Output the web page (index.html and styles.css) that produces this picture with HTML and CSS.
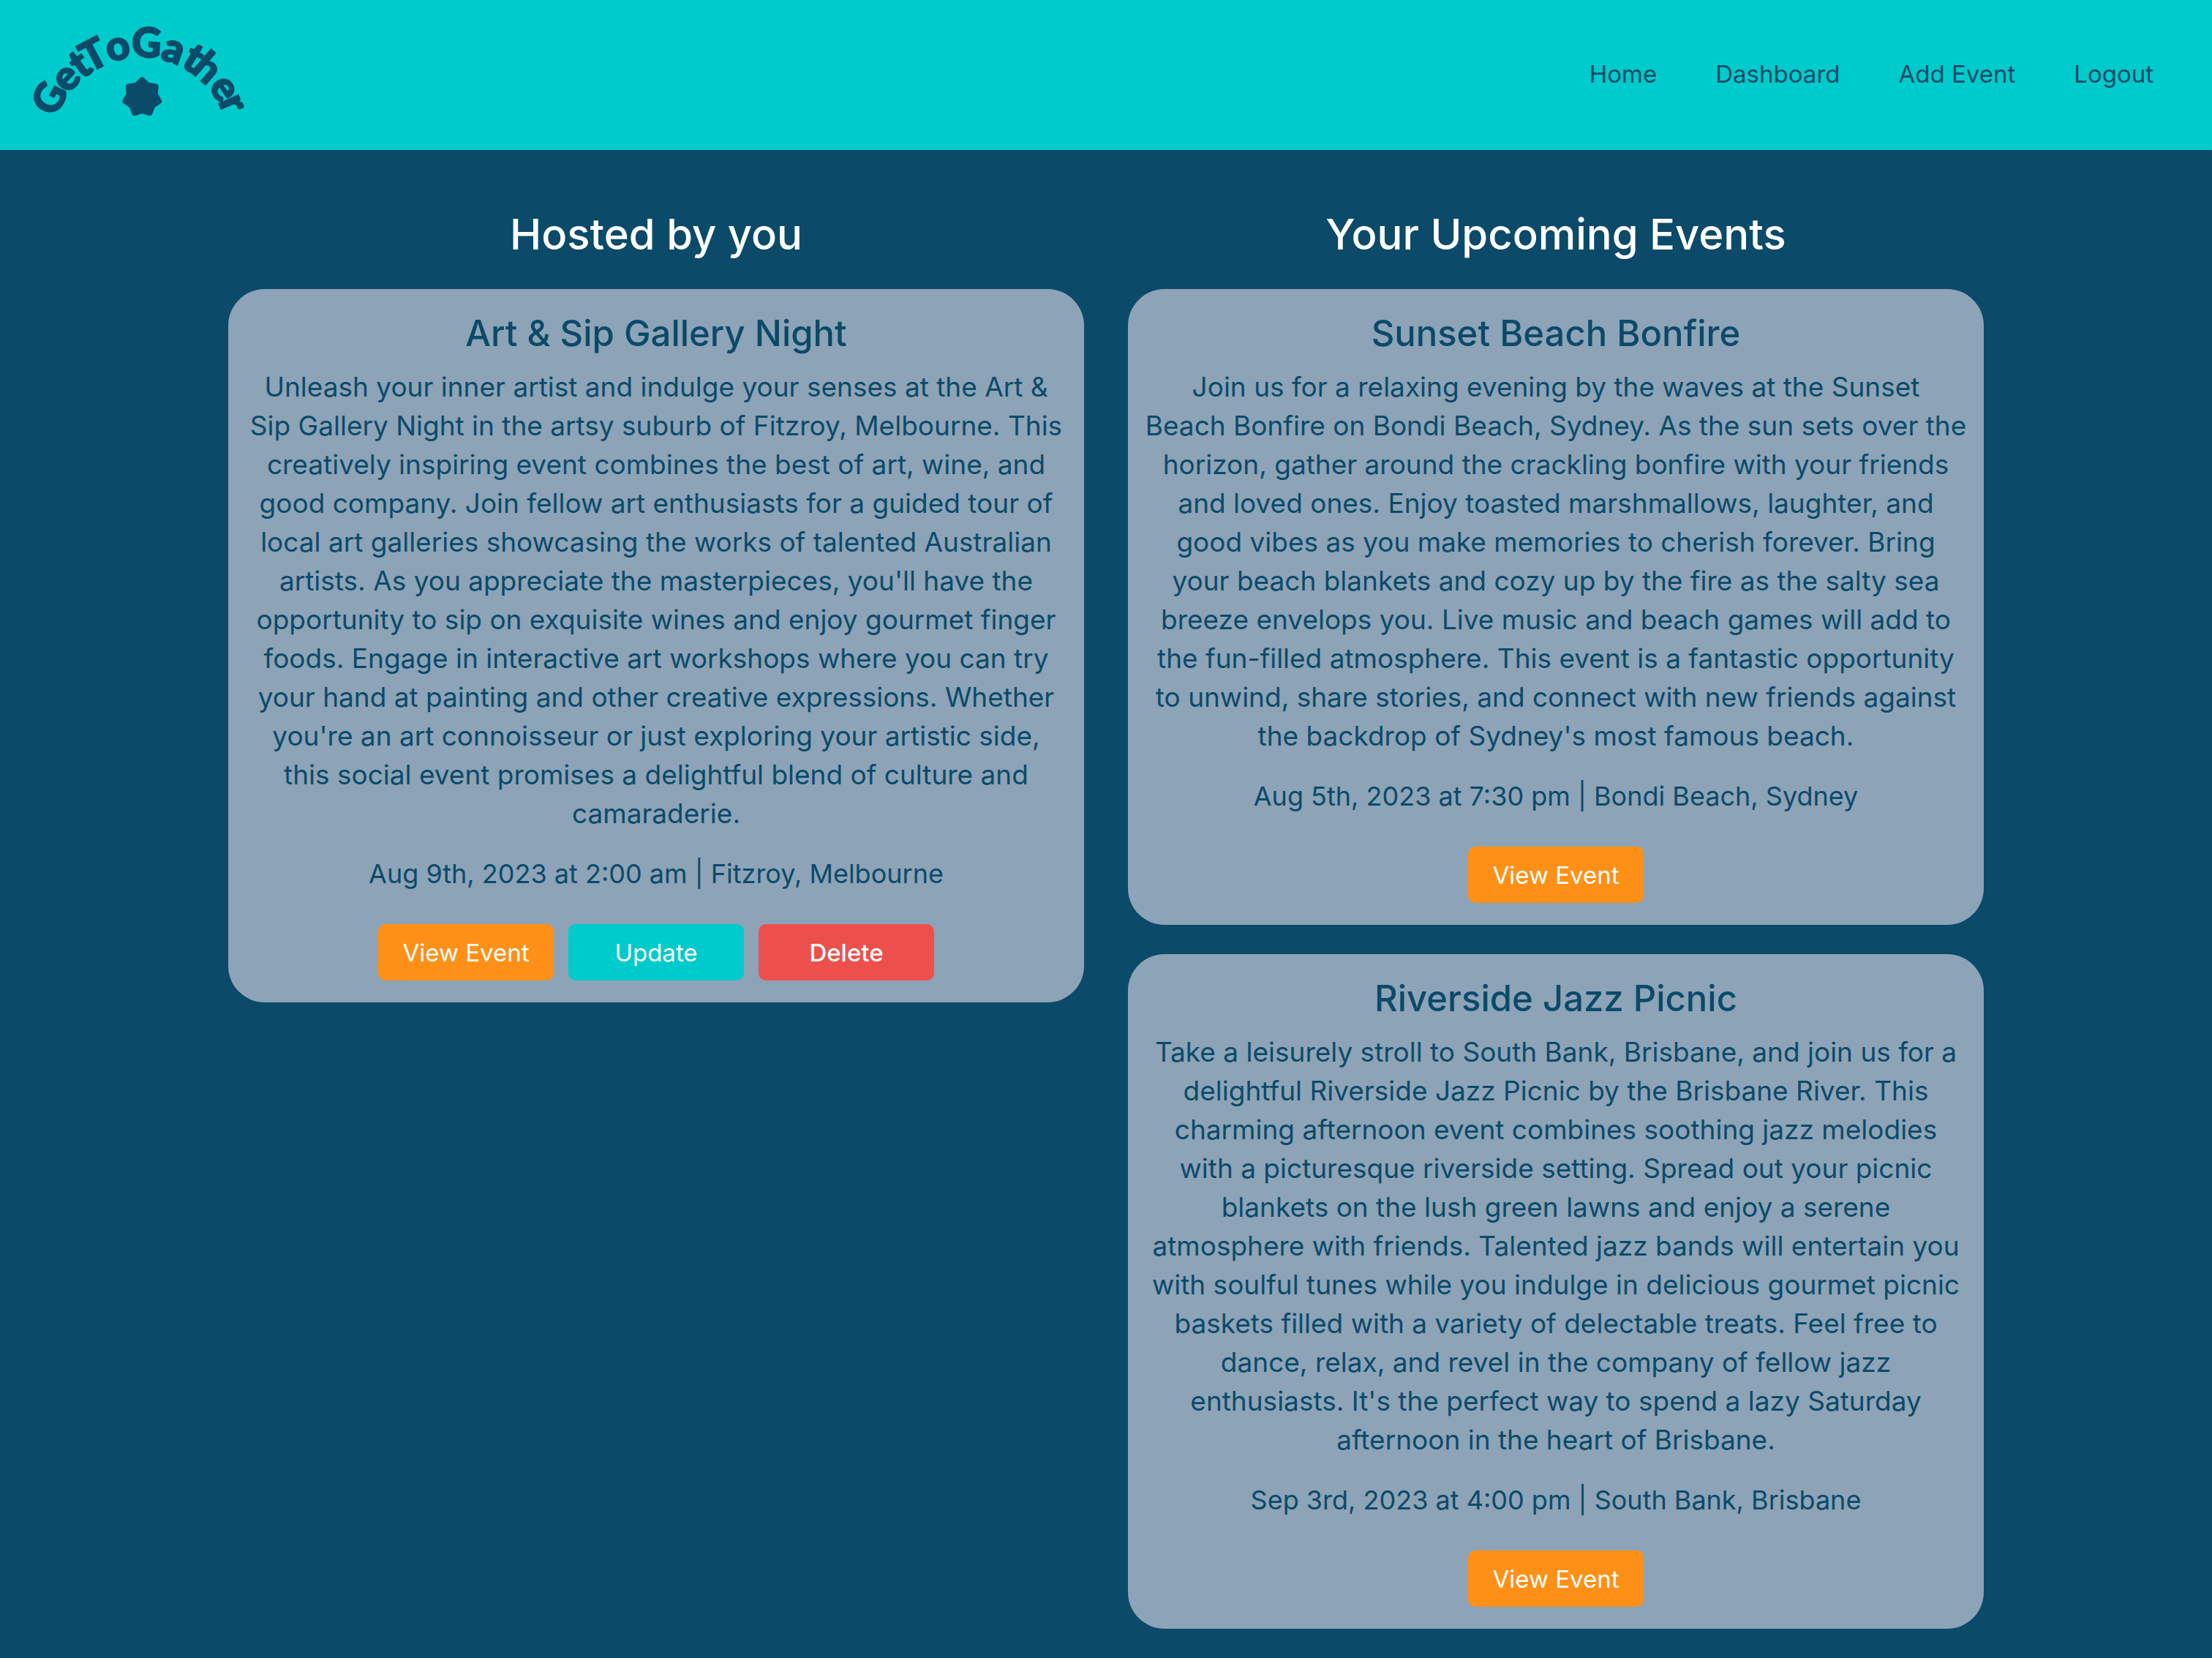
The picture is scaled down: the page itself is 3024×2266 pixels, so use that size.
FILE: index.html
```html
<!DOCTYPE html>
<html lang="en">
<head>
<meta charset="utf-8">
<meta name="viewport" content="width=device-width, initial-scale=1">
<title>GetToGather - Dashboard</title>
<link rel="stylesheet" href="styles.css">
</head>
<body>
<header class="site-header">
  <a class="logo" href="#" aria-label="GetToGather">
    <svg class="logo-art" viewBox="40 30 300 135" width="300" height="135">
      <text class="logo-text" x="76 93 112 122 149 179 218 246 259 284 298" y="161 129 109 100 85 77 80 90 97 118 139" rotate="-63.4 -47.8 -36.8 -27.7 -13.1 3 19.2 31 40.6 55.9 66">GetToGather</text>
      <polygon class="logo-star" points="194.3,109.5 202.1,116.8 212.7,118.4 211.8,129 217.2,138.2 208.4,144.2 204.5,154.2 194.3,151 184.1,154.2 180.2,144.2 171.4,138.2 176.8,129 175.9,118.4 186.5,116.8"/>
    </svg>
  </a>
  <nav class="site-nav">
    <a href="#">Home</a>
    <a href="#">Dashboard</a>
    <a href="#">Add Event</a>
    <a href="#">Logout</a>
  </nav>
</header>
<main class="dashboard">
  <section class="column">
    <h2 class="column-title">Hosted by you</h2>
    <article class="card">
      <h3 class="card-title">Art &amp; Sip Gallery Night</h3>
      <p class="card-text">Unleash your inner artist and indulge your senses at the Art &amp;<br>Sip Gallery Night in the artsy suburb of Fitzroy, Melbourne. This<br>creatively inspiring event combines the best of art, wine, and<br>good company. Join fellow art enthusiasts for a guided tour of<br>local art galleries showcasing the works of talented Australian<br>artists. As you appreciate the masterpieces, you'll have the<br>opportunity to sip on exquisite wines and enjoy gourmet finger<br>foods. Engage in interactive art workshops where you can try<br>your hand at painting and other creative expressions. Whether<br>you're an art connoisseur or just exploring your artistic side,<br>this social event promises a delightful blend of culture and<br>camaraderie.</p>
      <p class="card-meta">Aug 9th, 2023 at 2:00 am | Fitzroy, Melbourne</p>
      <div class="card-actions">
        <button class="btn btn-view" type="button">View Event</button>
        <button class="btn btn-update" type="button">Update</button>
        <button class="btn btn-delete" type="button">Delete</button>
      </div>
    </article>
  </section>
  <section class="column">
    <h2 class="column-title">Your Upcoming Events</h2>
    <article class="card">
      <h3 class="card-title">Sunset Beach Bonfire</h3>
      <p class="card-text">Join us for a relaxing evening by the waves at the Sunset<br>Beach Bonfire on Bondi Beach, Sydney. As the sun sets over the<br>horizon, gather around the crackling bonfire with your friends<br>and loved ones. Enjoy toasted marshmallows, laughter, and<br>good vibes as you make memories to cherish forever. Bring<br>your beach blankets and cozy up by the fire as the salty sea<br>breeze envelops you. Live music and beach games will add to<br>the fun-filled atmosphere. This event is a fantastic opportunity<br>to unwind, share stories, and connect with new friends against<br>the backdrop of Sydney's most famous beach.</p>
      <p class="card-meta">Aug 5th, 2023 at 7:30 pm | Bondi Beach, Sydney</p>
      <div class="card-actions">
        <button class="btn btn-view" type="button">View Event</button>
      </div>
    </article>
    <article class="card">
      <h3 class="card-title">Riverside Jazz Picnic</h3>
      <p class="card-text">Take a leisurely stroll to South Bank, Brisbane, and join us for a<br>delightful Riverside Jazz Picnic by the Brisbane River. This<br>charming afternoon event combines soothing jazz melodies<br>with a picturesque riverside setting. Spread out your picnic<br>blankets on the lush green lawns and enjoy a serene<br>atmosphere with friends. Talented jazz bands will entertain you<br>with soulful tunes while you indulge in delicious gourmet picnic<br>baskets filled with a variety of delectable treats. Feel free to<br>dance, relax, and revel in the company of fellow jazz<br>enthusiasts. It's the perfect way to spend a lazy Saturday<br>afternoon in the heart of Brisbane.</p>
      <p class="card-meta">Sep 3rd, 2023 at 4:00 pm | South Bank, Brisbane</p>
      <div class="card-actions">
        <button class="btn btn-view" type="button">View Event</button>
      </div>
    </article>
  </section>
</main>
</body>
</html>
```
FILE: styles.css
```css
:root {
  --navy: #0b4a69;
  --teal: #00cbcc;
  --card: #8da3b7;
  --orange: #ff9017;
  --red: #ed504c;
}

* {
  box-sizing: border-box;
}

body {
  margin: 0;
  background: var(--navy);
  color: var(--navy);
  font-family: Inter, "Open Sans", sans-serif;
  font-size: 36px;
  line-height: 53px;
}

h2, h3, p {
  margin: 0;
}

.site-header {
  display: flex;
  align-items: center;
  justify-content: space-between;
  padding: 30px 80px 40px 40px;
  background: var(--teal);
}

.logo-art {
  display: block;
  overflow: visible;
}

.logo-text {
  fill: var(--navy);
  stroke: var(--navy);
  stroke-width: 2;
  font-family: Lato, sans-serif;
  font-size: 56px;
  font-weight: 900;
}

.logo-star {
  fill: var(--navy);
  stroke: var(--navy);
  stroke-width: 8;
  stroke-linejoin: round;
}

.site-nav {
  display: flex;
  gap: 80px;
  padding-top: 8px;
}

.site-nav a {
  color: var(--navy);
  font-size: 33px;
  text-decoration: none;
}

.dashboard {
  display: grid;
  grid-template-columns: 1fr 1fr;
  align-items: start;
  gap: 60px;
  max-width: 2400px;
  margin: 0 auto;
  padding: 75px 0 39px;
}

.column {
  display: flex;
  flex-direction: column;
  gap: 40px;
}

.column-title {
  margin-bottom: -5px;
  color: #fff;
  font-size: 58px;
  font-weight: 500;
  line-height: 80px;
  text-align: center;
}

.card {
  padding: 25px 20px 30px;
  border-radius: 50px;
  background: var(--card);
  text-align: center;
}

.card-title {
  margin-bottom: 10px;
  font-size: 49px;
  font-weight: 500;
  line-height: 72px;
}

.card-text {
  font-size: 37px;
}

.card-meta {
  margin-top: 30px;
}

.card-actions {
  display: flex;
  justify-content: center;
  gap: 20px;
  margin-top: 42px;
}

.btn {
  width: 240px;
  height: 77px;
  padding: 0;
  border: 0;
  border-radius: 10px;
  color: #fff;
  font-family: inherit;
  font-size: 33px;
  font-weight: 400;
  cursor: pointer;
}

.btn-view {
  background: var(--orange);
}

.btn-update {
  background: var(--teal);
}

.btn-delete {
  background: var(--red);
  font-weight: 500;
}
```
